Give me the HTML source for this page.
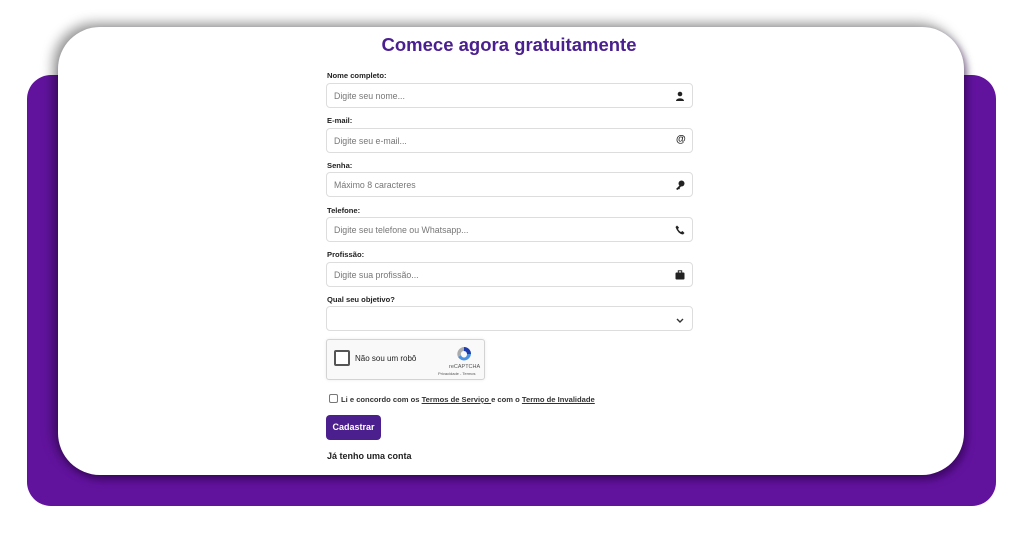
<!DOCTYPE html>
<html><head><meta charset="utf-8"><style>
*{box-sizing:border-box;margin:0;padding:0}
body{width:1024px;height:536px;background:#fff;position:relative;overflow:hidden;font-family:"Liberation Sans",sans-serif}
.purple{position:absolute;left:27px;top:75px;width:969px;height:431px;background:#62139e;border-radius:24px}
.card{position:absolute;left:58px;top:27px;width:906px;height:448px;background:#fff;border-radius:42px;box-shadow:-5px -4px 12px rgba(0,0,0,.4),3px 5px 8px rgba(40,0,70,.55)}
h1{position:absolute;left:0;width:1018px;top:34px;text-align:center;font-size:18.5px;font-weight:bold;color:#4a1f8f}
.lbl{position:absolute;left:327px;font-size:7.6px;font-weight:bold;color:#222}
.in{position:absolute;left:326px;width:367px;height:25px;border:1px solid #ddd;border-radius:4px;background:#fff;font-size:8.8px;color:#777;padding:7px 0 0 7px}
.ic{position:absolute;right:7px;top:7px;width:10px;height:10px}
.rc{position:absolute;left:326px;top:339px;width:159px;height:41px;border:1px solid #d3d3d3;border-radius:3px;background:#f9f9f9;box-shadow:0 0 3px rgba(0,0,0,.08)}
.rc .cb{position:absolute;left:7px;top:10px;width:16px;height:16px;border:2px solid #555;border-radius:2px;background:#fff}
.rc .t{position:absolute;left:28px;top:14px;font-size:8px;color:#222}
.small{position:absolute;font-size:5px;color:#555}
.terms{position:absolute;left:329px;top:394px;font-size:7.6px;font-weight:bold;color:#333}
.terms u{color:#333}
.terms .box{display:inline-block;width:9px;height:9px;border:1px solid #777;border-radius:2px;vertical-align:-1px;margin-right:3px}
.btn{position:absolute;left:326px;top:415px;width:55px;height:25px;background:#4c1f8e;color:#fff;border-radius:4px;font-size:9px;font-weight:bold;text-align:center;line-height:25px}
.acc{position:absolute;left:327px;top:451px;font-size:9px;font-weight:bold;color:#222}
</style></head><body>
<div class="purple"></div>
<div class="card"></div>
<h1>Comece agora gratuitamente</h1>

<div class="lbl" style="top:71px">Nome completo:</div>
<div class="in" style="top:83px">Digite seu nome...
<svg class="ic" viewBox="0 0 10 10"><circle cx="5" cy="3" r="2.3" fill="#222"/><path d="M1 10C1 6.5 9 6.5 9 10Z" fill="#222"/></svg></div>

<div class="lbl" style="top:116px">E-mail:</div>
<div class="in" style="top:128px">Digite seu e-mail...
<span class="ic" style="font-size:10px;font-weight:bold;color:#222;top:5px;right:6px">@</span></div>

<div class="lbl" style="top:161px">Senha:</div>
<div class="in" style="top:172px">Máximo 8 caracteres
<svg class="ic" viewBox="0 0 10 10"><circle cx="6.5" cy="3.5" r="3" fill="#222"/><path d="M5 5L1 9L2.5 10L3.5 9L4 9.5L5 8.5L4.5 8L6 6.5Z" fill="#222"/></svg></div>

<div class="lbl" style="top:206px">Telefone:</div>
<div class="in" style="top:217px">Digite seu telefone ou Whatsapp...
<svg class="ic" viewBox="0 0 10 10"><path d="M2 0.5L4 2.5L3 4Q4.5 6.5 6 7L7.5 6L9.5 8L8 9.5Q3 9 0.5 2Z" fill="#222"/></svg></div>

<div class="lbl" style="top:250px">Profissão:</div>
<div class="in" style="top:262px">Digite sua profissão...
<svg class="ic" viewBox="0 0 10 10"><rect x="0.5" y="2.5" width="9" height="7" rx="1" fill="#222"/><rect x="3.3" y="0.8" width="3.4" height="2.5" fill="none" stroke="#222" stroke-width="1"/></svg></div>

<div class="lbl" style="top:295px">Qual seu objetivo?</div>
<div class="in" style="top:306px">
<svg class="ic" viewBox="0 0 10 10" style="top:8px"><path d="M2 4L5 7L8 4" fill="none" stroke="#333" stroke-width="1.4"/></svg></div>

<div class="rc"><div class="cb"></div><div class="t">Não sou um robô</div>
<svg style="position:absolute;left:128px;top:5px" width="18" height="18" viewBox="0 0 18 18"><path d="M9 2A7 7 0 0 1 16 9H12A3 3 0 0 0 9 6Z" fill="#1c3aa9"/><path d="M16 9A7 7 0 0 1 3 12L6 10A3 3 0 0 0 12 9Z" fill="#4a90e2"/><path d="M3 12A7 7 0 0 1 9 2V6A3 3 0 0 0 6 10Z" fill="#ababab"/></svg>
<div class="small" style="left:122px;top:24px;font-size:5.5px">reCAPTCHA</div>
<div class="small" style="left:111px;top:31px;font-size:4px">Privacidade - Termos</div>
</div>

<div class="terms"><span class="box"></span>Li e concordo com os <u>Termos de Serviço </u> e com o <u>Termo de Invalidade</u></div>
<div class="btn">Cadastrar</div>
<div class="acc">Já tenho uma conta</div>
</body></html>
